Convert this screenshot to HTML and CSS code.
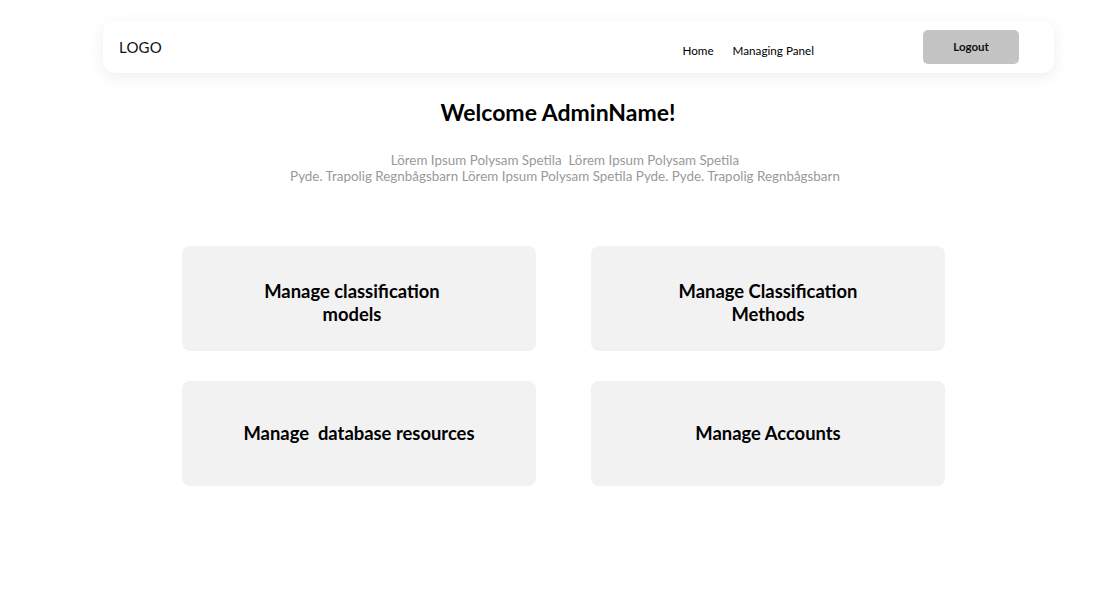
FILE: index.html
```html
<!DOCTYPE html>
<html>
<head>
<meta charset="utf-8">
<link rel="stylesheet" href="styles.css">
</head>
<body>
<header class="nav">
  <div class="logo">LOGO</div>
  <nav class="links">
    <a href="#">Home</a>
    <a href="#">Managing Panel</a>
  </nav>
  <button class="logout">Logout</button>
</header>
<section class="intro">
  <h1>Welcome AdminName!</h1>
  <p>Lörem Ipsum Polysam Spetila&nbsp; Lörem Ipsum Polysam Spetila<br>Pyde. Trapolig Regnbågsbarn Lörem Ipsum Polysam Spetila Pyde. Pyde. Trapolig Regnbågsbarn</p>
</section>
<main class="grid">
  <div class="card two"><span class="t1">Manage classification<br>models</span></div>
  <div class="card two"><span>Manage Classification<br>Methods</span></div>
  <div class="card"><span>Manage&nbsp; database resources</span></div>
  <div class="card"><span>Manage Accounts</span></div>
</main>
</body>
</html>
```
FILE: styles.css
```css
html, body {
  margin: 0;
  padding: 0;
  background: #fff;
  font-family: Lato, "Noto Sans", sans-serif;
  color: #000;
}
.nav {
  margin: 21px 0 0 103px;
  width: 951px;
  height: 52px;
  box-sizing: border-box;
  background: #fff;
  border-radius: 12px;
  box-shadow: 0 4px 16px rgba(0,0,0,0.07);
  display: flex;
  align-items: center;
  padding: 0 35px 0 16px;
}
.logo {
  font-size: 15px;
  color: #111;
  margin-top: 0;
  letter-spacing: 0.2px;
}
.links {
  margin-left: auto;
  display: flex;
  gap: 19px;
  margin-top: 6px;
}
.links a {
  font-size: 11.7px;
  color: #000;
  text-decoration: none;
}
.logout {
  margin-left: 109px;
  width: 96px;
  height: 34px;
  margin-top: 0;
  border: none;
  border-radius: 5px;
  background: #c4c4c4;
  font-family: inherit;
  font-size: 11.5px;
  font-weight: 700;
  color: #111;
  padding: 0 0 2px;
}
.intro {
  width: 1116px;
  text-align: center;
}
.intro h1 {
  margin: 25px 0 0;
  font-size: 23px;
  line-height: 28px;
  font-weight: 700;
}
.intro p {
  margin: 26px 0 0 14px;
  font-size: 13.4px;
  line-height: 16px;
  color: #999;
}
.grid {
  margin: 62px 0 0 182px;
  display: grid;
  grid-template-columns: 354px 354px;
  column-gap: 55px;
  row-gap: 30px;
}
.card {
  height: 105px;
  box-sizing: border-box;
  background: #f2f2f2;
  border-radius: 8px;
  display: flex;
  align-items: center;
  justify-content: center;
  text-align: center;
  font-size: 18.4px;
  font-weight: 700;
  line-height: 23px;
}
.card.two { padding-top: 9px; }
.t1 { margin-right: 14px; }
```
